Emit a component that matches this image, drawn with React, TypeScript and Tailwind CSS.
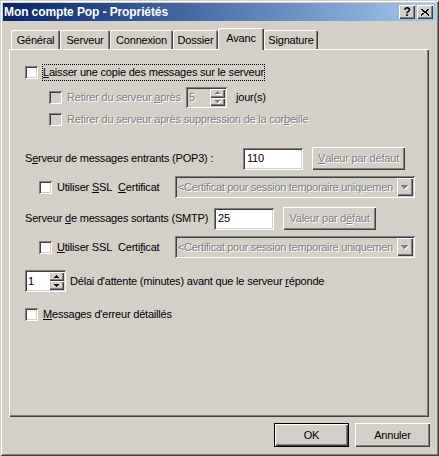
import React from 'react';

const bevelUp = 'shadow-[inset_1px_1px_0_#ffffff,inset_-1px_-1px_0_#404040,inset_-2px_-2px_0_#808080]';
const bevelDown = 'shadow-[inset_1px_1px_0_#808080,inset_-1px_-1px_0_#ffffff,inset_2px_2px_0_#404040,inset_-2px_-2px_0_#d4d0c8]';
const grayText = 'text-[#808080] [text-shadow:1px_1px_0_#ffffff]';

const U = ({ children }: { children: React.ReactNode }) => (
  <span className="underline decoration-1 underline-offset-[1px]">{children}</span>
);

const Checkbox = ({ disabled = false }: { disabled?: boolean }) => (
  <span className={`block w-[13px] h-[13px] shrink-0 ${disabled ? 'bg-[#d4d0c8]' : 'bg-white'} ${bevelDown}`} />
);

const Arrow = ({ up, disabled }: { up: boolean; disabled?: boolean }) => {
  const rows = up ? [[2, 1], [1, 3], [0, 5]] : [[0, 5], [1, 3], [2, 1]];
  const draw = (fill: string, off: number) =>
    rows.map(([x, w], i) => <rect key={fill + i} x={x + off} y={i + off} width={w} height={1} fill={fill} />);
  return (
    <svg width="6" height="4" shapeRendering="crispEdges">
      {disabled && draw('#ffffff', 1)}
      {draw(disabled ? '#808080' : '#000000', 0)}
    </svg>
  );
};

const SpinBox = ({ value, disabled = false }: { value: string; disabled?: boolean }) => (
  <div className={`flex w-[41px] h-full p-[2px] ${disabled ? 'bg-[#d4d0c8]' : 'bg-white'} ${bevelDown}`}>
    <span className={`flex-1 pl-[1px] flex items-center ${disabled ? grayText : ''}`}>{value}</span>
    <div className="flex flex-col w-[15px]">
      <div className={`flex-1 flex items-center justify-center bg-[#d4d0c8] ${bevelUp}`}>
        <Arrow up disabled={disabled} />
      </div>
      <div className={`flex-1 flex items-center justify-center bg-[#d4d0c8] ${bevelUp}`}>
        <Arrow up={false} disabled={disabled} />
      </div>
    </div>
  </div>
);

const Combo = () => (
  <div className={`flex w-[240px] h-[22px] p-[2px] bg-[#d4d0c8] ${bevelDown}`}>
    <span className={`flex-1 pl-[1px] flex items-center whitespace-nowrap tracking-[-0.3px] ${grayText}`}>
      {'<Certificat pour session temporaire uniquemen'}
    </span>
    <div className={`w-[16px] flex items-center justify-center bg-[#d4d0c8] ${bevelUp}`}>
      <svg width="8" height="5" shapeRendering="crispEdges">
        {[[0, 7], [1, 5], [2, 3], [3, 1]].map(([x, w], i) => (
          <rect key={'w' + i} x={x + 1} y={i + 1} width={w} height={1} fill="#ffffff" />
        ))}
        {[[0, 7], [1, 5], [2, 3], [3, 1]].map(([x, w], i) => (
          <rect key={'g' + i} x={x} y={i} width={w} height={1} fill="#808080" />
        ))}
      </svg>
    </div>
  </div>
);

const TextBox = ({ value }: { value: string }) => (
  <div className={`w-[60px] h-[22px] bg-white pl-[4px] flex items-center ${bevelDown}`}>{value}</div>
);

const DefaultButton = ({ children }: { children: React.ReactNode }) => (
  <div className={`ml-[9px] w-[93px] h-[23px] flex items-center justify-center bg-[#d4d0c8] ${bevelUp} ${grayText}`}>
    {children}
  </div>
);

const tabs = [
  { label: 'Général', w: 'w-[49px]' },
  { label: 'Serveur', w: 'w-[50px]' },
  { label: 'Connexion', w: 'w-[63px]' },
  { label: 'Dossier', w: 'w-[45px]' },
  { label: 'Avanc', w: 'w-[46px]', active: true },
  { label: 'Signature', w: 'w-[54px]' },
];

export default function App() {
  return (
    <div className="w-[439px] h-[456px] bg-[#d4d0c8] p-[3px] flex flex-col font-['Liberation_Sans',Arial,sans-serif] text-[11px] tracking-[-0.2px] text-black shadow-[inset_1px_1px_0_#d4d0c8,inset_-1px_-1px_0_#404040,inset_2px_2px_0_#ffffff,inset_-2px_-2px_0_#808080]">
      {/* title bar */}
      <div className="h-[18px] flex items-center bg-linear-to-r from-[#0a246a] to-[#a6caf0] pl-[1px] pr-[3px]">
        <span className="text-white font-bold text-[12px] tracking-[-0.1px]">Mon compte Pop - Propriétés</span>
        <div className="ml-auto flex gap-[2px]">
          <div className={`w-[16px] h-[14px] bg-[#d4d0c8] flex items-center justify-center font-bold text-[12px] leading-none ${bevelUp}`}>
            ?
          </div>
          <div className={`w-[16px] h-[14px] bg-[#d4d0c8] flex items-center justify-center ${bevelUp}`}>
            <svg width="8" height="7" shapeRendering="crispEdges">
              {[0, 1, 2, 3, 4, 5, 6].map((i) => (
                <g key={i}>
                  <rect x={i * (7 / 6)} y={i} width={2} height={1} fill="#000" />
                  <rect x={6 - i * (7 / 6) + 0} y={i} width={2} height={1} fill="#000" />
                </g>
              ))}
            </svg>
          </div>
        </div>
      </div>

      {/* tabs */}
      <div className="relative z-10 mt-[7px] pl-[8px] h-[21px] flex items-end">
        {tabs.map((t) =>
          t.active ? (
            <div
              key={t.label}
              className={`${t.w} h-[22px] mb-[-1px] pb-[2px] flex items-center justify-center bg-[#d4d0c8] rounded-tl-[2px] rounded-tr-[2px] shadow-[inset_1px_1px_0_#ffffff,inset_-1px_0_0_#404040,inset_-2px_0_0_#808080]`}
            >
              {t.label}
            </div>
          ) : (
            <div
              key={t.label}
              className={`${t.w} h-[19px] pt-[1px] flex items-center justify-center rounded-tl-[2px] rounded-tr-[2px] shadow-[inset_1px_1px_0_#ffffff,inset_-1px_0_0_#404040,inset_-2px_0_0_#808080]`}
            >
              {t.label}
            </div>
          )
        )}
      </div>

      {/* panel */}
      <div className="ml-[6px] mr-[7px] h-[368px] pt-[15px] pl-[16px] flex flex-col shadow-[inset_1px_1px_0_#ffffff,inset_-1px_-1px_0_#404040,inset_-2px_-2px_0_#808080]">
        <div className="h-[17px] flex items-center">
          <Checkbox />
          <span className="ml-[4px] px-[1px] h-[17px] flex items-center outline-1 outline-dotted outline-black -outline-offset-1">
            <U>L</U>aisser une copie des messages sur le serveur
          </span>
        </div>

        <div className="mt-[6px] h-[21px] pl-[24px] flex items-center">
          <Checkbox disabled />
          <span className={`ml-[5px] w-[119px] ${grayText}`}>
            Retirer du serveur <U>a</U>près
          </span>
          <SpinBox value="5" disabled />
          <span className="ml-[9px]">jour(s)</span>
        </div>

        <div className="mt-[3px] h-[17px] pl-[24px] flex items-center">
          <Checkbox disabled />
          <span className={`ml-[5px] ${grayText}`}>
            Retirer du serveur après suppression de la cor<U>b</U>eille
          </span>
        </div>

        <div className="mt-[19px] h-[23px] flex items-center">
          <span className="w-[218px]">
            S<U>e</U>rveur de messages entrants (POP3) :
          </span>
          <TextBox value="110" />
          <DefaultButton>
            <U>V</U>aleur par défaut
          </DefaultButton>
        </div>

        <div className="mt-[6px] h-[22px] pl-[14px] flex items-center">
          <Checkbox />
          <span className="ml-[5px] w-[61px]">
            Utiliser <U>S</U>SL
          </span>
          <span className="w-[57px]">
            <U>C</U>ertificat
          </span>
          <Combo />
        </div>

        <div className="mt-[9px] h-[23px] flex items-center">
          <span className="w-[189px]">
            Serveur <U>d</U>e messages sortants (SMTP)
          </span>
          <TextBox value="25" />
          <DefaultButton>
            Valeur par d<U>é</U>faut
          </DefaultButton>
        </div>

        <div className="mt-[6px] h-[22px] pl-[14px] flex items-center">
          <Checkbox />
          <span className="ml-[5px] w-[61px]">
            <U>U</U>tiliser SSL
          </span>
          <span className="w-[57px]">
            Certi<U>f</U>icat
          </span>
          <Combo />
        </div>

        <div className="mt-[12px] h-[22px] flex items-center">
          <SpinBox value="1" />
          <span className="ml-[4px]">
            Délai d'attente (minutes) avant que le serveur <U>r</U>éponde
          </span>
        </div>

        <div className="mt-[14px] h-[17px] flex items-center">
          <Checkbox />
          <span className="ml-[5px]">
            <U>M</U>essages d'erreur détaillés
          </span>
        </div>
      </div>

      {/* buttons */}
      <div className="mt-[6px] mr-[6px] flex justify-end gap-[6px]">
        <div className={`w-[75px] h-[24px] border border-black flex items-center justify-center bg-[#d4d0c8] ${bevelUp}`}>
          OK
        </div>
        <div className={`w-[75px] h-[24px] flex items-center justify-center bg-[#d4d0c8] ${bevelUp}`}>
          Annuler
        </div>
      </div>
    </div>
  );
}
